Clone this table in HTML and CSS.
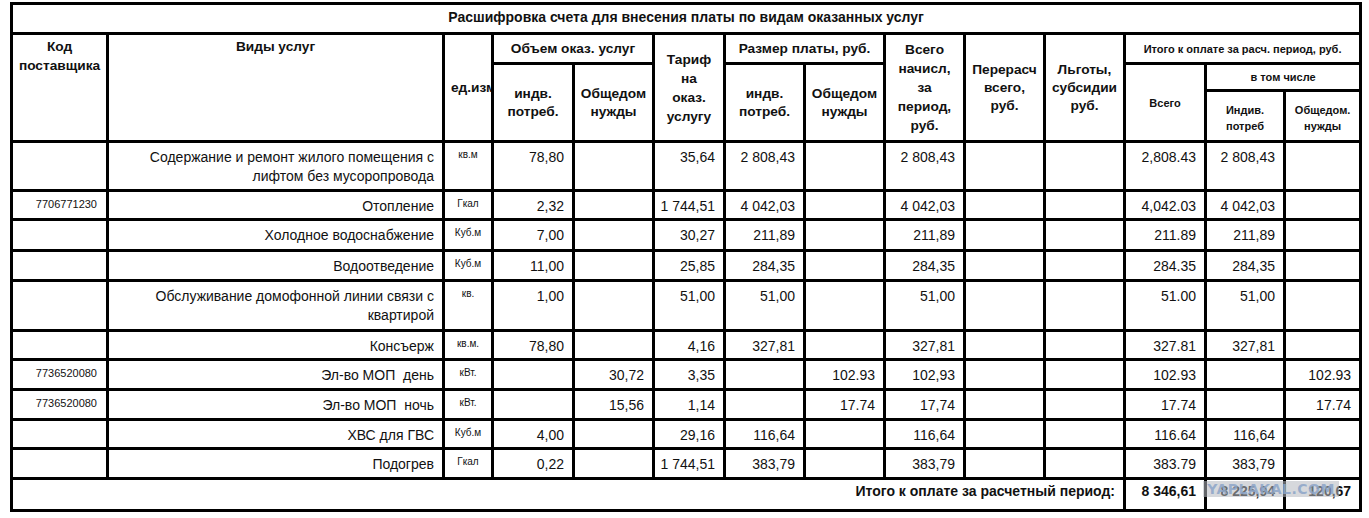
FILE: index.html
```html
<!DOCTYPE html>
<html lang="ru">
<head>
<meta charset="utf-8">
<title>Расшифровка счета</title>
<link rel="stylesheet" href="styles.css">
</head>
<body>
<div class="sheet">
  <table class="bill">
    <colgroup>
      <col class="col-code"><col class="col-name"><col class="col-unit">
      <col class="col-vol-ind"><col class="col-vol-odn"><col class="col-tariff">
      <col class="col-pay-ind"><col class="col-pay-odn"><col class="col-total">
      <col class="col-recalc"><col class="col-benefit">
      <col class="col-due"><col class="col-due-ind"><col class="col-due-odn">
    </colgroup>
    <thead>
      <tr class="r-title"><th class="title" colspan="14">Расшифровка счета для внесения платы по видам оказанных услуг</th></tr>
      <tr class="r-h1">
        <th class="top" rowspan="3">Код<br>поставщика</th>
        <th class="top" rowspan="3">Виды услуг</th>
        <th class="unit-h" rowspan="3"><div class="clip">ед.изм</div></th>
        <th colspan="2">Объем оказ. услуг</th>
        <th class="tall" rowspan="3">Тариф<br>на<br>оказ.<br>услугу</th>
        <th colspan="2">Размер платы, руб.</th>
        <th class="tall" rowspan="3">Всего<br>начисл,<br>за<br>период,<br>руб.</th>
        <th rowspan="3">Перерасч<br>всего,<br>руб.</th>
        <th rowspan="3">Льготы,<br>субсидии<br>руб.</th>
        <th class="small" colspan="3">Итого к оплате за расч. период, руб.</th>
      </tr>
      <tr class="r-h2">
        <th rowspan="2">индв.<br>потреб.</th>
        <th rowspan="2"><div class="clip">Общедом<br>нужды</div></th>
        <th rowspan="2">индв.<br>потреб.</th>
        <th rowspan="2">Общедом<br>нужды</th>
        <th class="small" rowspan="2">Всего</th>
        <th class="small" colspan="2">в том числе</th>
      </tr>
      <tr class="r-h3">
        <th class="small two">Индив.<br>потреб</th>
        <th class="small two">Общедом.<br>нужды</th>
      </tr>
    </thead>
    <tbody>
      <tr class="r-49">
        <td class="code"></td><td class="name">Содержание и ремонт жилого помещения с<br>лифтом без мусоропровода</td><td class="unit">кв.м</td>
        <td class="num">78,80</td><td class="num"></td><td class="num">35,64</td><td class="num">2 808,43</td><td class="num"></td><td class="num">2 808,43</td>
        <td class="num"></td><td class="num"></td><td class="num">2,808.43</td><td class="num">2 808,43</td><td class="num"></td>
      </tr>
      <tr class="r-29">
        <td class="code">7706771230</td><td class="name">Отопление</td><td class="unit">Гкал</td>
        <td class="num">2,32</td><td class="num"></td><td class="num">1 744,51</td><td class="num">4 042,03</td><td class="num"></td><td class="num">4 042,03</td>
        <td class="num"></td><td class="num"></td><td class="num">4,042.03</td><td class="num">4 042,03</td><td class="num"></td>
      </tr>
      <tr class="r-31">
        <td class="code"></td><td class="name">Холодное водоснабжение</td><td class="unit">Куб.м</td>
        <td class="num">7,00</td><td class="num"></td><td class="num">30,27</td><td class="num">211,89</td><td class="num"></td><td class="num">211,89</td>
        <td class="num"></td><td class="num"></td><td class="num">211.89</td><td class="num">211,89</td><td class="num"></td>
      </tr>
      <tr class="r-30">
        <td class="code"></td><td class="name">Водоотведение</td><td class="unit">Куб.м</td>
        <td class="num">11,00</td><td class="num"></td><td class="num">25,85</td><td class="num">284,35</td><td class="num"></td><td class="num">284,35</td>
        <td class="num"></td><td class="num"></td><td class="num">284.35</td><td class="num">284,35</td><td class="num"></td>
      </tr>
      <tr class="r-50">
        <td class="code"></td><td class="name">Обслуживание домофонной линии связи с<br>квартирой</td><td class="unit">кв.</td>
        <td class="num">1,00</td><td class="num"></td><td class="num">51,00</td><td class="num">51,00</td><td class="num"></td><td class="num">51,00</td>
        <td class="num"></td><td class="num"></td><td class="num">51.00</td><td class="num">51,00</td><td class="num"></td>
      </tr>
      <tr class="r-29">
        <td class="code"></td><td class="name">Консъерж</td><td class="unit">кв.м.</td>
        <td class="num">78,80</td><td class="num"></td><td class="num">4,16</td><td class="num">327,81</td><td class="num"></td><td class="num">327,81</td>
        <td class="num"></td><td class="num"></td><td class="num">327.81</td><td class="num">327,81</td><td class="num"></td>
      </tr>
      <tr class="r-30">
        <td class="code">7736520080</td><td class="name">Эл-во МОП&nbsp; день</td><td class="unit">кВт.</td>
        <td class="num"></td><td class="num">30,72</td><td class="num">3,35</td><td class="num"></td><td class="num">102.93</td><td class="num">102,93</td>
        <td class="num"></td><td class="num"></td><td class="num">102.93</td><td class="num"></td><td class="num">102.93</td>
      </tr>
      <tr class="r-30">
        <td class="code">7736520080</td><td class="name">Эл-во МОП&nbsp; ночь</td><td class="unit">кВт.</td>
        <td class="num"></td><td class="num">15,56</td><td class="num">1,14</td><td class="num"></td><td class="num">17.74</td><td class="num">17,74</td>
        <td class="num"></td><td class="num"></td><td class="num">17.74</td><td class="num"></td><td class="num">17.74</td>
      </tr>
      <tr class="r-29">
        <td class="code"></td><td class="name">ХВС для ГВС</td><td class="unit">Куб.м</td>
        <td class="num">4,00</td><td class="num"></td><td class="num">29,16</td><td class="num">116,64</td><td class="num"></td><td class="num">116,64</td>
        <td class="num"></td><td class="num"></td><td class="num">116.64</td><td class="num">116,64</td><td class="num"></td>
      </tr>
      <tr class="r-30">
        <td class="code"></td><td class="name">Подогрев</td><td class="unit">Гкал</td>
        <td class="num">0,22</td><td class="num"></td><td class="num">1 744,51</td><td class="num">383,79</td><td class="num"></td><td class="num">383,79</td>
        <td class="num"></td><td class="num"></td><td class="num">383.79</td><td class="num">383,79</td><td class="num"></td>
      </tr>
      <tr class="r-total">
        <td class="total-label" colspan="11">Итого к оплате за расчетный период:</td>
        <td class="total-num">8 346,61</td><td class="total-num">8 225,94</td><td class="total-num">120,67</td>
      </tr>
    </tbody>
  </table>
  <div class="watermark">YAPLAKAL.COM</div>
</div>
</body>
</html>
```

FILE: styles.css
```css
html, body {
  margin: 0;
  background: #fff;
}

body {
  font-family: "Liberation Sans", Arial, sans-serif;
  color: #111;
}

.sheet {
  position: relative;
  padding: 2px 0 0 10px;
}

.bill {
  border-collapse: collapse;
  table-layout: fixed;
  width: 1352px;
}

.bill th,
.bill td {
  border: 3px solid #000;
  padding: 0;
  overflow: hidden;
}

.col-code { width: 96px; }
.col-name { width: 336px; }
.col-unit { width: 49px; }
.col-vol-ind { width: 81px; }
.col-vol-odn { width: 80px; }
.col-tariff { width: 71px; }
.col-pay-ind { width: 80px; }
.col-pay-odn { width: 80px; }
.col-total { width: 80px; }
.col-recalc { width: 80px; }
.col-benefit { width: 80px; }
.col-due { width: 81px; }
.col-due-ind { width: 79px; }
.col-due-odn { width: 76px; }

/* row heights */
.r-title { height: 30px; }
.r-h1 { height: 30px; }
.r-h2 { height: 27px; }
.r-h3 { height: 51px; }
.r-49 { height: 49px; }
.r-29 { height: 29px; }
.r-30 { height: 30px; }
.r-31 { height: 31px; }
.r-50 { height: 50px; }
.r-total { height: 32px; }

/* header */
.bill th {
  font-size: 13.7px;
  font-weight: bold;
  line-height: 18px;
  text-align: center;
  vertical-align: middle;
}

.bill th.title {
  font-size: 14px;
  padding-bottom: 4px;
}

.bill th.top {
  vertical-align: top;
  padding-top: 2px;
  line-height: 19px;
}

.bill th.tall {
  line-height: 19px;
}

.bill th.unit-h {
  text-align: left;
  padding-left: 6px;
}

.bill th.small {
  font-size: 11px;
  line-height: 16px;
}

.bill th.two {
  padding-top: 3px;
}

.clip {
  white-space: nowrap;
  overflow: hidden;
}

/* body */
.bill td {
  vertical-align: top;
  font-size: 14px;
  line-height: 19px;
  padding-top: 5px;
}

.bill td.name {
  text-align: right;
  padding-right: 8px;
}

.bill td.num {
  text-align: right;
  padding-right: 8px;
}

.bill td.unit {
  font-size: 10px;
  line-height: 14px;
  text-align: center;
}

.bill td.code {
  font-size: 11px;
  line-height: 14px;
  text-align: right;
  padding-right: 9px;
}

.bill td.total-label,
.bill td.total-num {
  font-size: 14px;
  font-weight: bold;
  line-height: 18px;
  padding-top: 2px;
  text-align: right;
  padding-right: 8px;
}

.watermark {
  position: absolute;
  left: 1203px;
  top: 481px;
  width: 136px;
  height: 16px;
  background: rgba(180, 184, 192, 0.55);
  color: rgba(140, 165, 200, 0.85);
  font-family: "DejaVu Sans", sans-serif;
  font-size: 14px;
  font-weight: bold;
  line-height: 16px;
  letter-spacing: 0.5px;
  text-align: center;
  white-space: nowrap;
  overflow: hidden;
  pointer-events: none;
}
```
